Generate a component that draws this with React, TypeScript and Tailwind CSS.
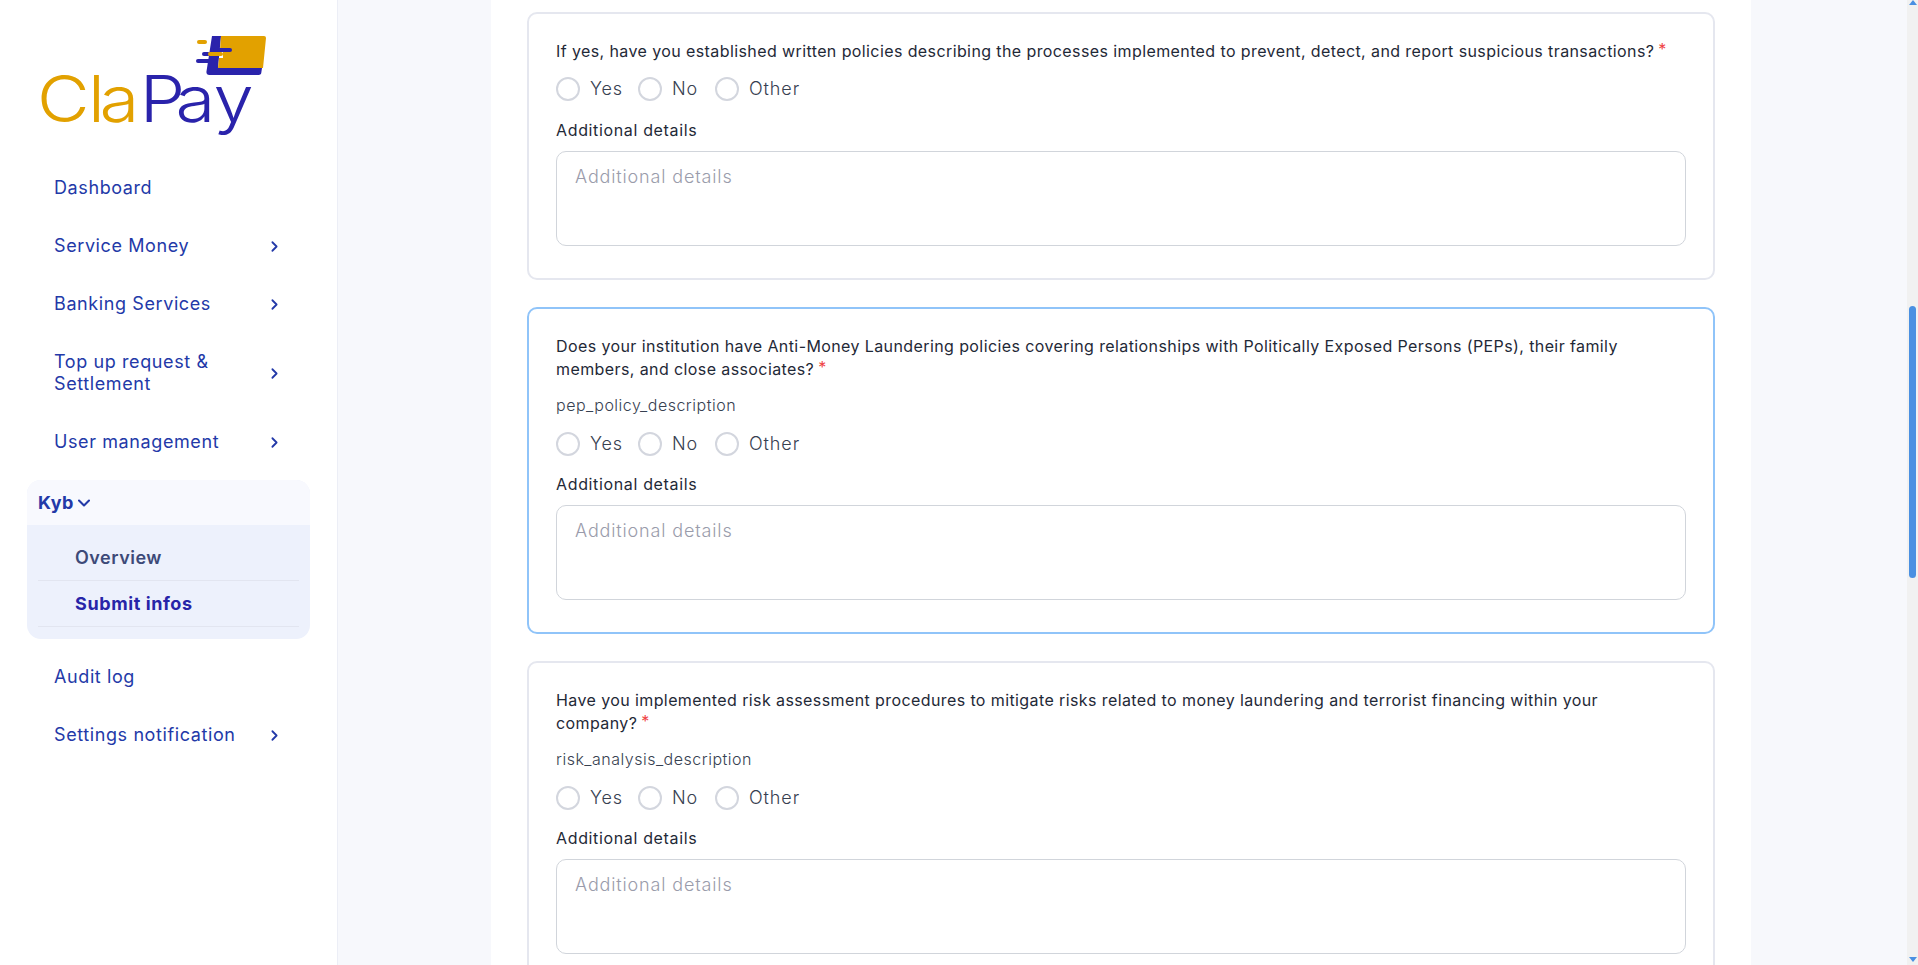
import { ChevronRight, ChevronDown } from 'lucide-react';

const FONT = "font-['Inter','Liberation_Sans',sans-serif]";

function Logo() {
  return (
    <svg width="280" height="110" viewBox="0 0 280 110" className="block overflow-visible">
      <g transform="translate(-27,-30)">
        <path d="M212 36h9l-3 32h44l-.6 4a3 3 0 0 1-3 3h-49a3 3 0 0 1-3-3z" fill="#2a23ab" />
        <path d="M221 36h43a2 2 0 0 1 2 2l-3 30h-45l1-10h4v-8h-3z" fill="#e2a100" />
        <rect x="197" y="40" width="10" height="4" rx="2" fill="#e2a100" />
        <rect x="213" y="48" width="19" height="4" rx="2" fill="#2a23ab" />
        <rect x="202" y="52" width="8" height="4" rx="2" fill="#2a23ab" />
        <rect x="208" y="52" width="15" height="4" rx="2" fill="#e2a100" />
        <rect x="196" y="59" width="22" height="4" rx="2" fill="#2a23ab" />
        <text y="122" transform="scale(1.13 1)" fontFamily="Inter, sans-serif" fontWeight="300" fontSize="64">
          <tspan x="32.7 77.9 88.1" fill="#e2a100">Cla</tspan>
          <tspan x="123.6 155.4 189" fill="#2a23ab">Pay</tspan>
        </text>
      </g>
    </svg>
  );
}

function NavItem({ label, chevron }: { label: React.ReactNode; chevron?: boolean }) {
  return (
    <div className="flex items-center justify-between pl-[54px] pr-[54px] py-[17px] text-[18px] leading-[22px] tracking-[0.6px] text-[#2339a8]">
      <span>{label}</span>
      {chevron && <ChevronRight size={17} strokeWidth={2.5} className="text-[#2339a8]" />}
    </div>
  );
}

function Sidebar() {
  return (
    <aside className="w-[338px] shrink-0 h-full bg-white border-r border-[#eceef6] flex flex-col">
      <div className="pl-[27px] pt-[30px] h-[160px]">
        <Logo />
      </div>
      <div className="flex flex-col gap-[2px]">
        <NavItem label="Dashboard" />
        <NavItem label="Service Money" chevron />
        <NavItem label="Banking Services" chevron />
        <NavItem label={<>Top up request &amp;<br />Settlement</>} chevron />
        <NavItem label="User management" chevron />
      </div>
      <div className="mx-[27px] mt-[10px] rounded-[14px] overflow-hidden bg-[#edf1fc]">
        <div className="h-[45px] bg-[#f8f9fe] flex items-center pl-[11px] text-[18px] font-bold tracking-[0.5px] text-[#2339a8]">
          Kyb
          <ChevronDown size={20} strokeWidth={2.5} />
        </div>
        <div className="px-[11px] pb-[12px]">
          <div className="h-[56px] pl-[37px] pt-[22px] border-b border-[#e2e5f0] text-[18px] leading-[22px] font-semibold tracking-[0.5px] text-[#3d4a78]">
            Overview
          </div>
          <div className="h-[46px] pl-[37px] border-b border-[#e2e5f0] text-[18px] font-bold tracking-[0.6px] text-[#2724a8] flex items-center">
            Submit infos
          </div>
        </div>
      </div>
      <div className="mt-[10px] flex flex-col gap-[2px]">
        <NavItem label="Audit log" />
        <NavItem label="Settings notification" chevron />
      </div>
    </aside>
  );
}

function Radio({ label, width }: { label: string; width: string }) {
  return (
    <label className={`flex items-center gap-[10px] ${width}`}>
      <input type="radio" name={label} className="appearance-none w-6 h-6 rounded-full border-2 border-[#d3d6de] bg-white" />
      <span className="text-[18px] leading-6 tracking-[0.9px] font-light text-[#374151]">{label}</span>
    </label>
  );
}

function QuestionCard({ title, hint, active }: { title: React.ReactNode; hint?: string; active?: boolean }) {
  return (
    <section className={`w-[1188px] shrink-0 rounded-[10px] border-2 bg-white px-[27px] pt-[26px] pb-[32px] ${active ? 'border-[#90c4f9]' : 'border-[#e5e7ef]'}`}>
      <p className="text-[16px] leading-[23px] tracking-[0.4px] text-[#1f2937]">
        {title}<span className="text-[#ef4444] leading-[0] align-[2px] ml-[4px]">*</span>
      </p>
      {hint && <p className="mt-[14px] text-[16px] leading-[20px] tracking-[0.5px] font-light text-[#374151]">{hint}</p>}
      <div className={`flex items-center ${hint ? 'mt-[17px]' : 'mt-[14px]'}`}>
        <Radio label="Yes" width="w-[82px]" />
        <Radio label="No" width="w-[77px]" />
        <Radio label="Other" width="w-auto" />
      </div>
      <p className={`${hint ? 'mt-[18px]' : 'mt-[19px]'} text-[16px] leading-[20px] tracking-[0.65px] text-[#1f2937]`}>Additional details</p>
      <textarea
        placeholder="Additional details"
        className="mt-[11px] block w-full h-[95px] resize-none rounded-[10px] border border-[#d1d5db] bg-white px-[18px] py-[13px] text-[18px] leading-[24px] tracking-[0.85px] font-light outline-none placeholder:text-[#9a9cab]"
      />
    </section>
  );
}

function Scrollbar() {
  return (
    <div className="w-[11px] shrink-0 h-full bg-[#f1f1f1] flex flex-col items-center">
      <svg width="8" height="5" viewBox="0 0 8 5" className="block"><path d="M4 0l4 5H0z" fill="#4a90e2" /></svg>
      <div className="mt-[301px] w-[7px] h-[272px] rounded-full bg-[#4a90e2]" />
      <svg width="8" height="5" viewBox="0 0 8 5" className="block mt-auto mb-[3px]"><path d="M4 5l4-5H0z" fill="#4a90e2" /></svg>
    </div>
  );
}

export default function App() {
  return (
    <div className={`${FONT} h-screen w-full flex overflow-hidden bg-[#f7f8fc]`}>
      <Sidebar />
      <main className="flex-1 h-full pl-[153px] overflow-hidden">
        <div className="w-[1260px] h-full bg-white pl-[36px] pt-[12px] flex flex-col gap-[27px] overflow-hidden">
          <QuestionCard title="If yes, have you established written policies describing the processes implemented to prevent, detect, and report suspicious transactions?" />
          <QuestionCard
            active
            hint="pep_policy_description"
            title={<>Does your institution have Anti-Money Laundering policies covering relationships with Politically Exposed Persons (PEPs), their family<br />members, and close associates?</>}
          />
          <QuestionCard
            hint="risk_analysis_description"
            title={<>Have you implemented risk assessment procedures to mitigate risks related to money laundering and terrorist financing within your<br />company?</>}
          />
        </div>
      </main>
      <Scrollbar />
    </div>
  );
}
